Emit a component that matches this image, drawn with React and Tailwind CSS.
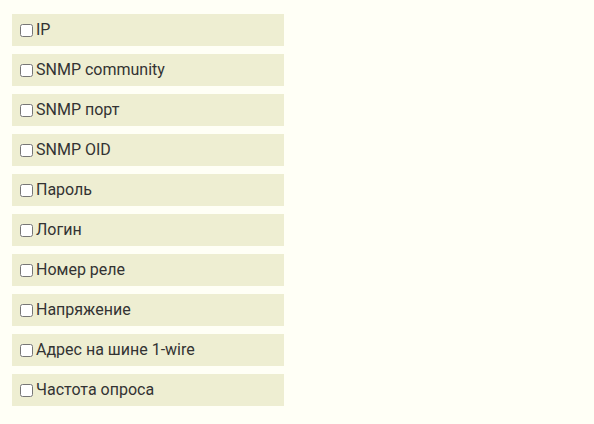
const fields = [
  "IP",
  "SNMP community",
  "SNMP порт",
  "SNMP OID",
  "Пароль",
  "Логин",
  "Номер реле",
  "Напряжение",
  "Адрес на шине 1-wire",
  "Частота опроса",
];

const App = () => {
  return (
    <div className="min-h-[424px] bg-[#fffff6] pl-3 pt-[14px] font-['Roboto',sans-serif] text-[#333]">
      <div className="flex w-[272px] flex-col gap-2">
        {fields.map((name) => (
          <label key={name} className="flex h-8 items-center bg-[#eeeed2] px-1 text-base">
            <input type="checkbox" className="m-[3px] ml-1" />
            {name}
          </label>
        ))}
      </div>
    </div>
  );
};

export default App;
